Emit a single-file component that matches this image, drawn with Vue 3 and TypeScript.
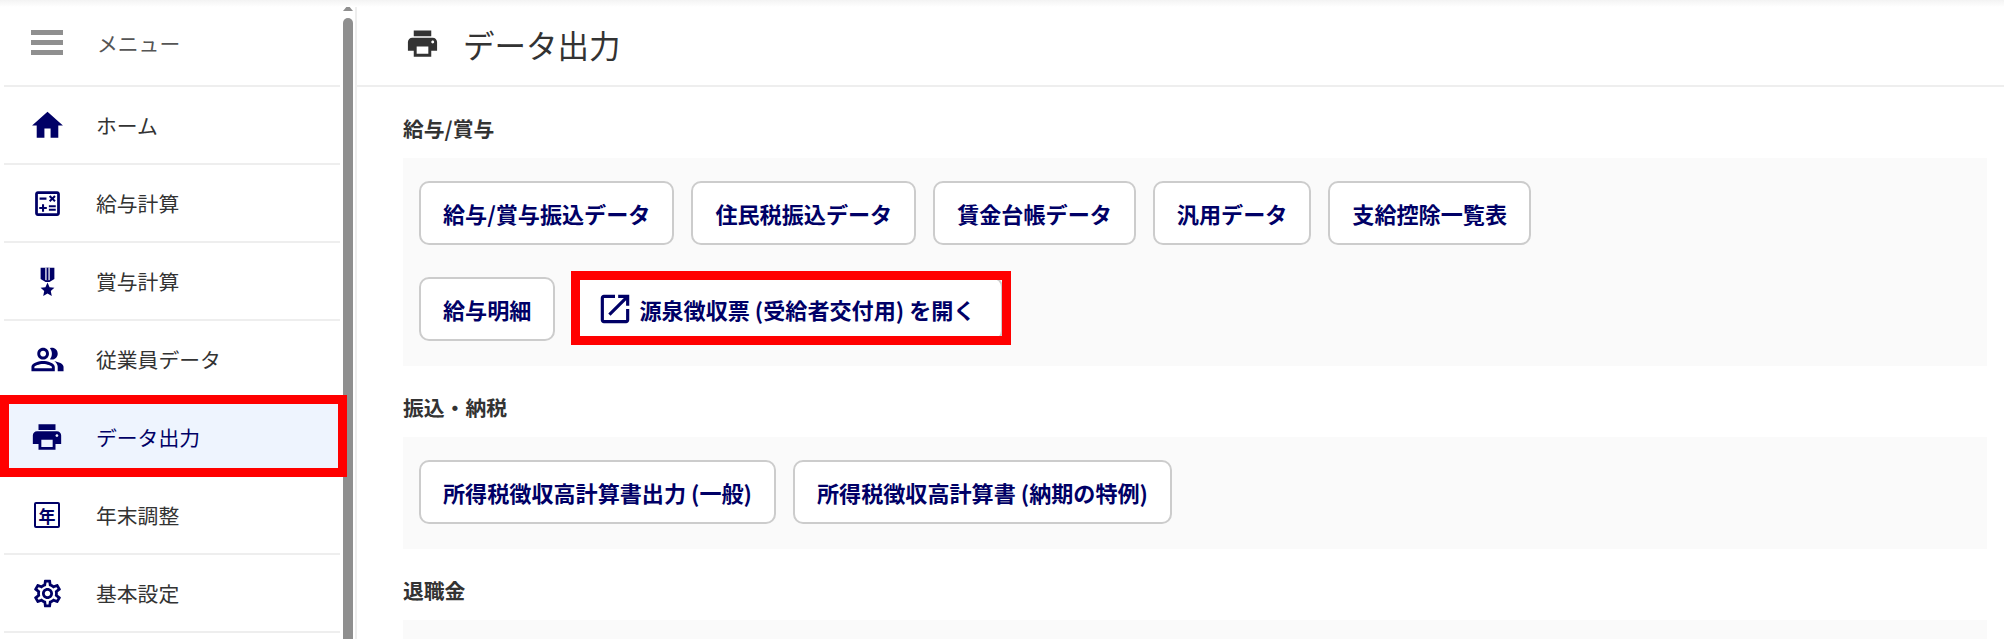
<script setup lang="ts">
interface MenuItem {
  label: string;
  icon: string;
  active?: boolean;
}

const menu: MenuItem[] = [
  { label: "ホーム", icon: "home" },
  { label: "給与計算", icon: "calc" },
  { label: "賞与計算", icon: "medal" },
  { label: "従業員データ", icon: "people" },
  { label: "データ出力", icon: "print", active: true },
  { label: "年末調整", icon: "year" },
  { label: "基本設定", icon: "gear" },
];

const printPath =
  "M19 8H5c-1.66 0-3 1.34-3 3v6h4v4h12v-4h4v-6c0-1.66-1.34-3-3-3zm-3 11H8v-5h8v5zm3-7c-.55 0-1-.45-1-1s.45-1 1-1 1 .45 1 1-.45 1-1 1zm-1-9H6v4h12V3z";

const salaryButtons = ["給与/賞与振込データ", "住民税振込データ", "賃金台帳データ", "汎用データ", "支給控除一覧表"];
const taxButtons = ["所得税徴収高計算書出力 (一般)", "所得税徴収高計算書 (納期の特例)"];
</script>

<template>
  <div class="page">
    <aside class="sidebar">
      <nav class="menu">
        <div class="menu-head">
          <span class="burger"><i></i><i></i><i></i></span>
          <span class="head-label">メニュー</span>
        </div>
        <a v-for="item in menu" :key="item.label" class="menu-item" :class="{ active: item.active }">
          <span class="menu-icon">
            <svg v-if="item.icon === 'home'" width="37" height="37" viewBox="0 0 24 24"><path d="M10 20v-6h4v6h5v-8h3L12 3 2 12h3v8z" /></svg>
            <svg v-else-if="item.icon === 'calc'" width="33" height="33" viewBox="0 0 24 24"><path d="M19 3H5c-1.1 0-2 .9-2 2v14c0 1.1.9 2 2 2h14c1.1 0 2-.9 2-2V5c0-1.1-.9-2-2-2zm0 16H5V5h14v14z" /><path d="M6.25 7.72h5v1.5h-5zM13 15.75h5v1.5h-5zM13 13.25h5v1.5h-5zM8 18h1.5v-2h2v-1.5h-2v-2H8v2H6V16h2zM14.09 10.95 15.5 9.54l1.41 1.41 1.06-1.06-1.41-1.42 1.41-1.41L16.91 6 15.5 7.41 14.09 6l-1.06 1.06 1.41 1.41-1.41 1.42z" /></svg>
            <svg v-else-if="item.icon === 'medal'" width="33" height="33" viewBox="0 0 24 24"><path d="M7 2h10v8.2l-3.6 2.1h-2.8L7 10.2z" /><path d="M10.4 2h3.2v9h-3.2z" fill="#fff" /><path d="M11.3 2h1.4v9h-1.4z" /><path d="m12 12.8 1.5 3.3 3.5.4-2.6 2.4.7 3.6-3.1-1.8-3.1 1.8.7-3.6L7 16.5l3.5-.4z" /></svg>
            <svg v-else-if="item.icon === 'people'" width="35" height="35" viewBox="0 0 24 24"><path d="M16.67 13.13C18.04 14.06 19 15.32 19 17v3h4v-3c0-2.18-3.57-3.47-6.33-3.87z" /><path d="M15 12c2.21 0 4-1.79 4-4s-1.79-4-4-4c-.47 0-.91.1-1.33.24C14.5 5.27 15 6.58 15 8s-.5 2.73-1.33 3.76c.42.14.86.24 1.33.24z" /><path d="M9 12c2.21 0 4-1.79 4-4s-1.79-4-4-4-4 1.79-4 4 1.79 4 4 4zm0-6c1.1 0 2 .9 2 2s-.9 2-2 2-2-.9-2-2 .9-2 2-2zM9 13c-2.67 0-8 1.34-8 4v3h16v-3c0-2.66-5.33-4-8-4zm6 5H3v-.99C3.2 16.29 6.3 15 9 15s5.8 1.29 6 2v1z" /></svg>
            <svg v-else-if="item.icon === 'print'" width="34" height="34" viewBox="0 0 24 24"><path :d="printPath" /></svg>
            <span v-else-if="item.icon === 'year'" class="year-icon">年</span>
            <svg v-else width="33" height="33" viewBox="0 0 24 24"><path d="M19.43 12.98c.04-.32.07-.64.07-.98s-.03-.66-.07-.98l2.11-1.65c.19-.15.24-.42.12-.64l-2-3.46c-.09-.16-.26-.25-.44-.25-.06 0-.12.01-.17.03l-2.49 1c-.52-.4-1.08-.73-1.69-.98l-.38-2.65C14.46 2.18 14.25 2 14 2h-4c-.25 0-.46.18-.49.42l-.38 2.65c-.61.25-1.17.59-1.69.98l-2.49-1c-.06-.02-.12-.03-.18-.03-.17 0-.34.09-.43.25l-2 3.46c-.13.22-.07.49.12.64l2.11 1.65c-.04.32-.07.65-.07.98s.03.66.07.98l-2.11 1.65c-.19.15-.24.42-.12.64l2 3.46c.09.16.26.25.44.25.06 0 .12-.01.17-.03l2.49-1c.52.4 1.08.73 1.69.98l.38 2.65c.03.24.24.42.49.42h4c.25 0 .46-.18.49-.42l.38-2.65c.61-.25 1.17-.59 1.69-.98l2.49 1c.06.02.12.03.18.03.17 0 .34-.09.43-.25l2-3.46c.12-.22.07-.49-.12-.64l-2.11-1.65zm-1.98-1.71c.04.31.05.52.05.73s-.02.43-.05.73l-.14 1.13.89.7 1.08.84-.7 1.21-1.27-.51-1.04-.42-.9.68c-.43.32-.84.56-1.25.73l-1.06.43-.16 1.13-.2 1.35h-1.4l-.19-1.35-.16-1.13-1.06-.43c-.43-.18-.83-.41-1.23-.71l-.91-.7-1.06.43-1.27.51-.7-1.21 1.08-.84.89-.7-.14-1.13c-.03-.31-.05-.54-.05-.74s.02-.43.05-.73l.14-1.13-.89-.7-1.08-.84.7-1.21 1.27.51 1.04.42.9-.68c.43-.32.84-.56 1.25-.73l1.06-.43.16-1.13.2-1.35h1.39l.19 1.35.16 1.13 1.06.43c.43.18.83.41 1.23.71l.91.7 1.06-.43 1.27-.51.7 1.21-1.07.85-.89.7.14 1.13zM12 8c-2.21 0-4 1.79-4 4s1.79 4 4 4 4-1.79 4-4-1.79-4-4-4zm0 6c-1.1 0-2-.9-2-2s.9-2 2-2 2 .9 2 2-.9 2-2 2z" /></svg>
          </span>
          <span class="item-label">{{ item.label }}</span>
        </a>
      </nav>
      <div class="scrollbar">
        <span class="scroll-up"></span>
        <span class="scroll-thumb"></span>
      </div>
    </aside>

    <main class="main">
      <header class="title-bar">
        <svg class="title-icon" width="35" height="35" viewBox="0 0 24 24"><path :d="printPath" /></svg>
        <h1>データ出力</h1>
      </header>

      <section class="content">
        <h2>給与/賞与</h2>
        <div class="panel">
          <div class="btn-row">
            <button v-for="b in salaryButtons" :key="b" class="btn">{{ b }}</button>
          </div>
          <div class="btn-row">
            <button class="btn">給与明細</button>
            <button class="btn marked">
              <svg width="38" height="38" viewBox="0 0 24 24"><path d="M19 19H5V5h7V3H5c-1.11 0-2 .9-2 2v14c0 1.1.89 2 2 2h14c1.1 0 2-.9 2-2v-7h-2v7zM14 3v2h3.59l-9.83 9.83 1.41 1.41L19 6.41V10h2V3h-7z" /></svg>
              源泉徴収票 (受給者交付用) を開く
            </button>
          </div>
        </div>

        <h2>振込・納税</h2>
        <div class="panel">
          <div class="btn-row">
            <button v-for="b in taxButtons" :key="b" class="btn">{{ b }}</button>
          </div>
        </div>

        <h2>退職金</h2>
        <div class="panel last"></div>
      </section>
    </main>
  </div>
</template>

<style>
html,
body {
  margin: 0;
  overflow: hidden;
  background: #fff;
}
</style>

<style scoped>
.page {
  position: relative;
  display: flex;
  width: 2004px;
  height: 639px;
  overflow: hidden;
  background: #fff;
  font-family: "Noto Sans CJK JP", "Liberation Sans", sans-serif;
  color: #333;
}

.page::before {
  content: "";
  position: absolute;
  left: 0;
  right: 0;
  top: 0;
  height: 7px;
  background: linear-gradient(#f3f3f3, #fff);
}

.sidebar {
  display: flex;
  flex: none;
  width: 355px;
  border-right: 2px solid #eee;
}

.menu {
  width: 336px;
  margin-left: 4px;
}

.menu-head,
.menu-item {
  display: flex;
  align-items: center;
  box-sizing: border-box;
  height: 78px;
  border-bottom: 2px solid #eee;
  font-size: 20.8px;
}

.menu-head {
  height: 87px;
}

.head-label {
  margin-left: 34px;
  color: #555;
}

.burger {
  display: flex;
  flex-direction: column;
  gap: 5px;
  width: 32px;
  margin-left: 27px;
}

.burger i {
  display: block;
  height: 5px;
  background: #8f8f8f;
}

.menu-icon {
  display: flex;
  flex: none;
  align-items: center;
  justify-content: center;
  width: 40px;
  margin-left: 23px;
  fill: #000066;
}

.item-label {
  margin-left: 29px;
}

.menu-item.active {
  position: relative;
  background: #eef4fe;
  color: #000066;
}

.menu-item.active::after {
  content: "";
  position: absolute;
  left: -4px;
  right: -7px;
  top: -4px;
  bottom: -2px;
  border: 9px solid #f00;
}

.year-icon {
  display: flex;
  align-items: center;
  justify-content: center;
  box-sizing: border-box;
  width: 26px;
  height: 26px;
  border: 2.5px solid #000066;
  border-radius: 2px;
  color: #000066;
  font-size: 17px;
  font-weight: 700;
  line-height: 1;
}

.scrollbar {
  display: flex;
  flex-direction: column;
  align-items: center;
  width: 10px;
  margin-left: 3px;
}

.scroll-up {
  width: 0;
  height: 0;
  margin-top: 5px;
  border-left: 5px solid transparent;
  border-right: 5px solid transparent;
  border-bottom: 6px solid #8f8f8f;
}

.scroll-thumb {
  flex: 1;
  width: 10px;
  margin-top: 7px;
  border-radius: 5px 5px 0 0;
  background: #8f8f8f;
}

.main {
  flex: 1;
  min-width: 0;
}

.title-bar {
  display: flex;
  align-items: center;
  box-sizing: border-box;
  height: 87px;
  padding: 2px 0 0 48px;
  border-bottom: 2px solid #eee;
}

.title-icon {
  fill: #333;
}

h1 {
  margin: 0 0 0 23px;
  font-size: 31.5px;
  font-weight: 400;
}

.content {
  padding: 0 17px 0 46px;
}

h2 {
  display: flex;
  align-items: center;
  box-sizing: border-box;
  height: 71px;
  padding-top: 11px;
  margin: 0;
  font-size: 20.8px;
  font-weight: 700;
}

.panel {
  display: flex;
  flex-direction: column;
  gap: 32px;
  padding: 23px 16px 25px;
  background: #fafafa;
}

.panel.last {
  height: 40px;
}

.btn-row {
  display: flex;
  gap: 17px;
}

.btn {
  display: flex;
  align-items: center;
  box-sizing: border-box;
  height: 64px;
  padding: 0 22px;
  border: 2px solid #ccc;
  border-radius: 10px;
  background: #fff;
  font-family: inherit;
  font-size: 22.1px;
  font-weight: 700;
  color: #000066;
  white-space: nowrap;
}

.btn svg {
  flex: none;
  margin-right: 5px;
  fill: #000066;
}

.btn.marked {
  position: relative;
  padding-right: 26px;
}

.btn.marked::after {
  content: "";
  position: absolute;
  left: -3px;
  right: -10px;
  top: -8px;
  bottom: -6px;
  border: 9px solid #f00;
}
</style>
